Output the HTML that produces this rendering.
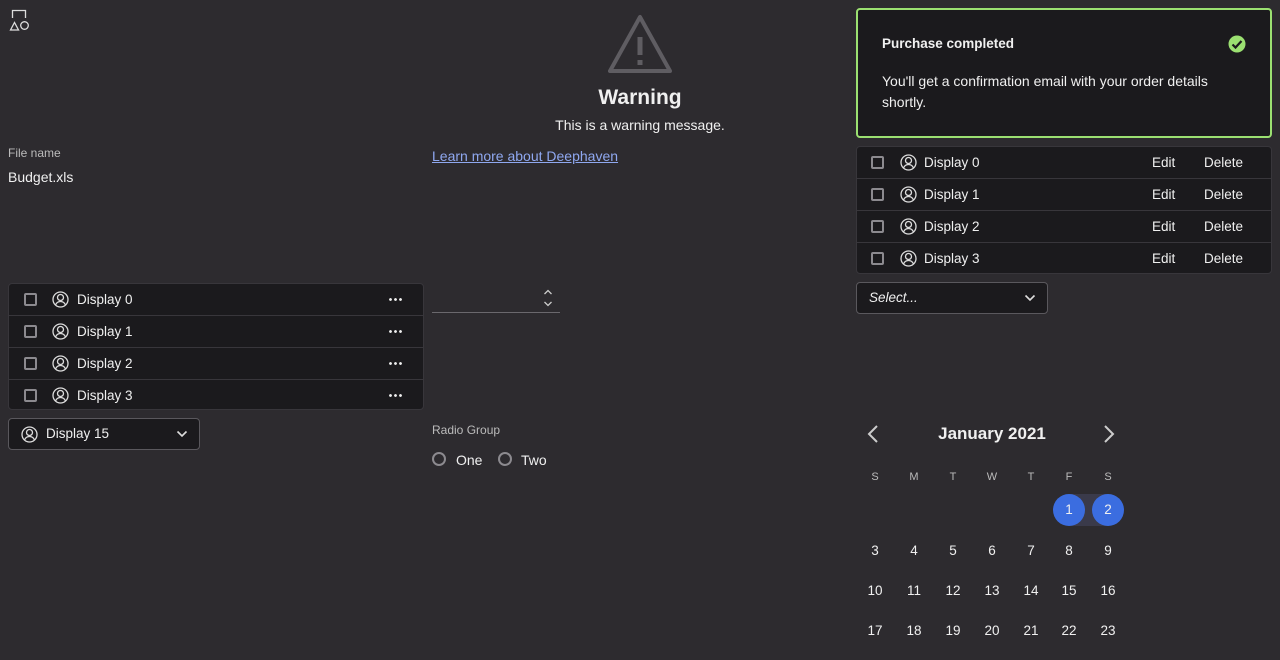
<!DOCTYPE html>
<html><head><style>
*{box-sizing:border-box;margin:0;padding:0}
body{width:1280px;height:660px;background:#2d2b2f;font-family:"Liberation Sans",sans-serif;color:#f0f0f0;position:relative;overflow:hidden;font-size:13.5px}
.a{position:absolute}
.list{position:absolute;background:#1b1a1d;border:1px solid #38363b;border-radius:4px}
.row{height:32px;border-bottom:1px solid #38363b;position:relative}
.row:last-child{border-bottom:none}
.cb{position:absolute;top:9px;width:13px;height:13px;border:2px solid #8c8a8f;border-radius:2px}
.ic{position:absolute;top:7px}
.lbl{position:absolute;top:8px;font-size:13.5px}
.dots{position:absolute;top:14px;width:16px;height:3px;background:radial-gradient(circle,#eee 1.2px,transparent 1.6px) 0 0/5px 3px repeat-x}
.cal div{position:absolute;width:32px;text-align:center;font-size:13.5px}
</style></head><body>
<svg class="a" style="left:9px;top:9px" width="22" height="22" viewBox="0 0 22 22" fill="none" stroke="#ddd" stroke-width="1.3"><path d="M3.5 9V1.5h13V9"/><path d="M1.5 21L5.5 13.5l4 7.5z"/><circle cx="15.5" cy="16.5" r="3.8"/></svg>
<div class="a" style="left:8px;top:146px;font-size:12px;color:#bbb">File name</div>
<div class="a" style="left:8px;top:169px;font-size:14px">Budget.xls</div>

<div class="list" style="left:8px;top:283px;width:416px;height:127px">
<div class="row"><div class="cb" style="left:15px"></div><svg class="ic" style="left:43px" width="17" height="17" viewBox="0 0 17 17" fill="none" stroke="#ddd" stroke-width="1.3"><circle cx="8.5" cy="8.5" r="7.5"/><circle cx="8.5" cy="6.5" r="3"/><path d="M3.5 14c1-2.5 3-3.5 5-3.5s4 1 5 3.5"/></svg><div class="lbl" style="left:68px">Display 0</div><div class="dots" style="left:379px"></div></div>
<div class="row"><div class="cb" style="left:15px"></div><svg class="ic" style="left:43px" width="17" height="17" viewBox="0 0 17 17" fill="none" stroke="#ddd" stroke-width="1.3"><circle cx="8.5" cy="8.5" r="7.5"/><circle cx="8.5" cy="6.5" r="3"/><path d="M3.5 14c1-2.5 3-3.5 5-3.5s4 1 5 3.5"/></svg><div class="lbl" style="left:68px">Display 1</div><div class="dots" style="left:379px"></div></div>
<div class="row"><div class="cb" style="left:15px"></div><svg class="ic" style="left:43px" width="17" height="17" viewBox="0 0 17 17" fill="none" stroke="#ddd" stroke-width="1.3"><circle cx="8.5" cy="8.5" r="7.5"/><circle cx="8.5" cy="6.5" r="3"/><path d="M3.5 14c1-2.5 3-3.5 5-3.5s4 1 5 3.5"/></svg><div class="lbl" style="left:68px">Display 2</div><div class="dots" style="left:379px"></div></div>
<div class="row"><div class="cb" style="left:15px"></div><svg class="ic" style="left:43px" width="17" height="17" viewBox="0 0 17 17" fill="none" stroke="#ddd" stroke-width="1.3"><circle cx="8.5" cy="8.5" r="7.5"/><circle cx="8.5" cy="6.5" r="3"/><path d="M3.5 14c1-2.5 3-3.5 5-3.5s4 1 5 3.5"/></svg><div class="lbl" style="left:68px">Display 3</div><div class="dots" style="left:379px"></div></div>
</div>

<div class="a" style="left:8px;top:418px;width:192px;height:32px;background:#1b1a1d;border:1px solid #5a585d;border-radius:4px">
<svg class="a" style="left:12px;top:7px" width="17" height="17" viewBox="0 0 17 17" fill="none" stroke="#ddd" stroke-width="1.3"><circle cx="8.5" cy="8.5" r="7.5"/><circle cx="8.5" cy="6.5" r="3"/><path d="M3.5 14c1-2.5 3-3.5 5-3.5s4 1 5 3.5"/></svg>
<div class="a" style="left:37px;top:7px">Display 15</div>
<svg class="a" style="left:167px;top:11px" width="12" height="8" viewBox="0 0 12 8" fill="none" stroke="#ddd" stroke-width="1.6"><path d="M1.5 1.5L6 6l4.5-4.5"/></svg>
</div>

<svg class="a" style="left:608px;top:14px" width="64" height="60" viewBox="0 0 64 60"><path d="M32 3L2 57h60z" fill="none" stroke="#5f5d62" stroke-width="4" stroke-linejoin="round"/><rect x="29.5" y="23" width="5" height="18" fill="#5f5d62"/><rect x="29.5" y="46" width="5" height="5" fill="#5f5d62"/></svg>
<div class="a" style="left:540px;top:86px;width:200px;text-align:center;font-size:21px;font-weight:bold">Warning</div>
<div class="a" style="left:500px;top:117px;width:280px;text-align:center;font-size:14px">This is a warning message.</div>
<div class="a" style="left:432px;top:148px;font-size:14px;color:#8fa8f0;text-decoration:underline">Learn more about Deephaven</div>

<div class="a" style="left:432px;top:312px;width:128px;height:1px;background:#6a686d"></div>
<svg class="a" style="left:542px;top:287px" width="12" height="22" viewBox="0 0 12 22" fill="none" stroke="#ccc" stroke-width="1.3"><path d="M2.5 7L6 3.5 9.5 7M2.5 15L6 18.5 9.5 15"/></svg>

<div class="a" style="left:432px;top:423px;font-size:12px;color:#bbb">Radio Group</div>
<div class="a" style="left:432px;top:452px;width:14px;height:14px;border:2px solid #8c8a8f;border-radius:50%"></div>
<div class="a" style="left:456px;top:452px;font-size:14px">One</div>
<div class="a" style="left:498px;top:452px;width:14px;height:14px;border:2px solid #8c8a8f;border-radius:50%"></div>
<div class="a" style="left:521px;top:452px;font-size:14px">Two</div>

<div class="a" style="left:856px;top:8px;width:416px;height:130px;background:#1b1a1d;border:2px solid #9be071;border-radius:4px">
<div class="a" style="left:24px;top:26px;font-weight:bold;font-size:13.5px">Purchase completed</div>
<svg class="a" style="left:370px;top:25px" width="18" height="18" viewBox="0 0 18 18"><circle cx="9" cy="9" r="8.5" fill="#9be071"/><path d="M4.5 9.5l3 3 6-6.5" fill="none" stroke="#1b1a1d" stroke-width="2.2"/></svg>
<div class="a" style="left:24px;top:61px;width:370px;line-height:21px;font-size:14px">You'll get a confirmation email with your order details shortly.</div>
</div>

<div class="list" style="left:856px;top:146px;width:416px;height:128px">
<div class="row"><div class="cb" style="left:14px"></div><svg class="ic" style="left:43px" width="17" height="17" viewBox="0 0 17 17" fill="none" stroke="#ddd" stroke-width="1.3"><circle cx="8.5" cy="8.5" r="7.5"/><circle cx="8.5" cy="6.5" r="3"/><path d="M3.5 14c1-2.5 3-3.5 5-3.5s4 1 5 3.5"/></svg><div class="lbl" style="left:67px">Display 0</div><div class="lbl" style="left:295px">Edit</div><div class="lbl" style="left:347px">Delete</div></div>
<div class="row"><div class="cb" style="left:14px"></div><svg class="ic" style="left:43px" width="17" height="17" viewBox="0 0 17 17" fill="none" stroke="#ddd" stroke-width="1.3"><circle cx="8.5" cy="8.5" r="7.5"/><circle cx="8.5" cy="6.5" r="3"/><path d="M3.5 14c1-2.5 3-3.5 5-3.5s4 1 5 3.5"/></svg><div class="lbl" style="left:67px">Display 1</div><div class="lbl" style="left:295px">Edit</div><div class="lbl" style="left:347px">Delete</div></div>
<div class="row"><div class="cb" style="left:14px"></div><svg class="ic" style="left:43px" width="17" height="17" viewBox="0 0 17 17" fill="none" stroke="#ddd" stroke-width="1.3"><circle cx="8.5" cy="8.5" r="7.5"/><circle cx="8.5" cy="6.5" r="3"/><path d="M3.5 14c1-2.5 3-3.5 5-3.5s4 1 5 3.5"/></svg><div class="lbl" style="left:67px">Display 2</div><div class="lbl" style="left:295px">Edit</div><div class="lbl" style="left:347px">Delete</div></div>
<div class="row"><div class="cb" style="left:14px"></div><svg class="ic" style="left:43px" width="17" height="17" viewBox="0 0 17 17" fill="none" stroke="#ddd" stroke-width="1.3"><circle cx="8.5" cy="8.5" r="7.5"/><circle cx="8.5" cy="6.5" r="3"/><path d="M3.5 14c1-2.5 3-3.5 5-3.5s4 1 5 3.5"/></svg><div class="lbl" style="left:67px">Display 3</div><div class="lbl" style="left:295px">Edit</div><div class="lbl" style="left:347px">Delete</div></div>
</div>

<div class="a" style="left:856px;top:282px;width:192px;height:32px;background:#1b1a1d;border:1px solid #5a585d;border-radius:4px">
<div class="a" style="left:12px;top:7px;font-style:italic">Select...</div>
<svg class="a" style="left:167px;top:11px" width="12" height="8" viewBox="0 0 12 8" fill="none" stroke="#ddd" stroke-width="1.6"><path d="M1.5 1.5L6 6l4.5-4.5"/></svg>
</div>

<svg class="a" style="left:866px;top:424px" width="14" height="20" viewBox="0 0 14 20" fill="none" stroke="#ccc" stroke-width="2"><path d="M11 2L3 10l8 8"/></svg>
<svg class="a" style="left:1102px;top:424px" width="14" height="20" viewBox="0 0 14 20" fill="none" stroke="#ccc" stroke-width="2"><path d="M3 2l8 8-8 8"/></svg>
<div class="a" style="left:892px;top:424px;width:200px;text-align:center;font-size:17px;font-weight:bold">January 2021</div>
<div class="a" style="left:1069px;top:494px;width:40px;height:32px;background:#3a3a4a"></div>
<div class="cal">
<div style="left:859px;top:471px;font-size:11px;color:#bbb">S</div><div style="left:898px;top:471px;font-size:11px;color:#bbb">M</div><div style="left:937px;top:471px;font-size:11px;color:#bbb">T</div><div style="left:976px;top:471px;font-size:11px;color:#bbb">W</div><div style="left:1015px;top:471px;font-size:11px;color:#bbb">T</div><div style="left:1053px;top:471px;font-size:11px;color:#bbb">F</div><div style="left:1092px;top:471px;font-size:11px;color:#bbb">S</div>
<div style="left:1053px;top:494px;height:32px;line-height:32px;border-radius:50%;background:#3b6de0">1</div><div style="left:1092px;top:494px;height:32px;line-height:32px;border-radius:50%;background:#3b6de0">2</div>
<div style="left:859px;top:543px">3</div><div style="left:898px;top:543px">4</div><div style="left:937px;top:543px">5</div><div style="left:976px;top:543px">6</div><div style="left:1015px;top:543px">7</div><div style="left:1053px;top:543px">8</div><div style="left:1092px;top:543px">9</div>
<div style="left:859px;top:583px">10</div><div style="left:898px;top:583px">11</div><div style="left:937px;top:583px">12</div><div style="left:976px;top:583px">13</div><div style="left:1015px;top:583px">14</div><div style="left:1053px;top:583px">15</div><div style="left:1092px;top:583px">16</div>
<div style="left:859px;top:623px">17</div><div style="left:898px;top:623px">18</div><div style="left:937px;top:623px">19</div><div style="left:976px;top:623px">20</div><div style="left:1015px;top:623px">21</div><div style="left:1053px;top:623px">22</div><div style="left:1092px;top:623px">23</div>
</div>
</body></html>
